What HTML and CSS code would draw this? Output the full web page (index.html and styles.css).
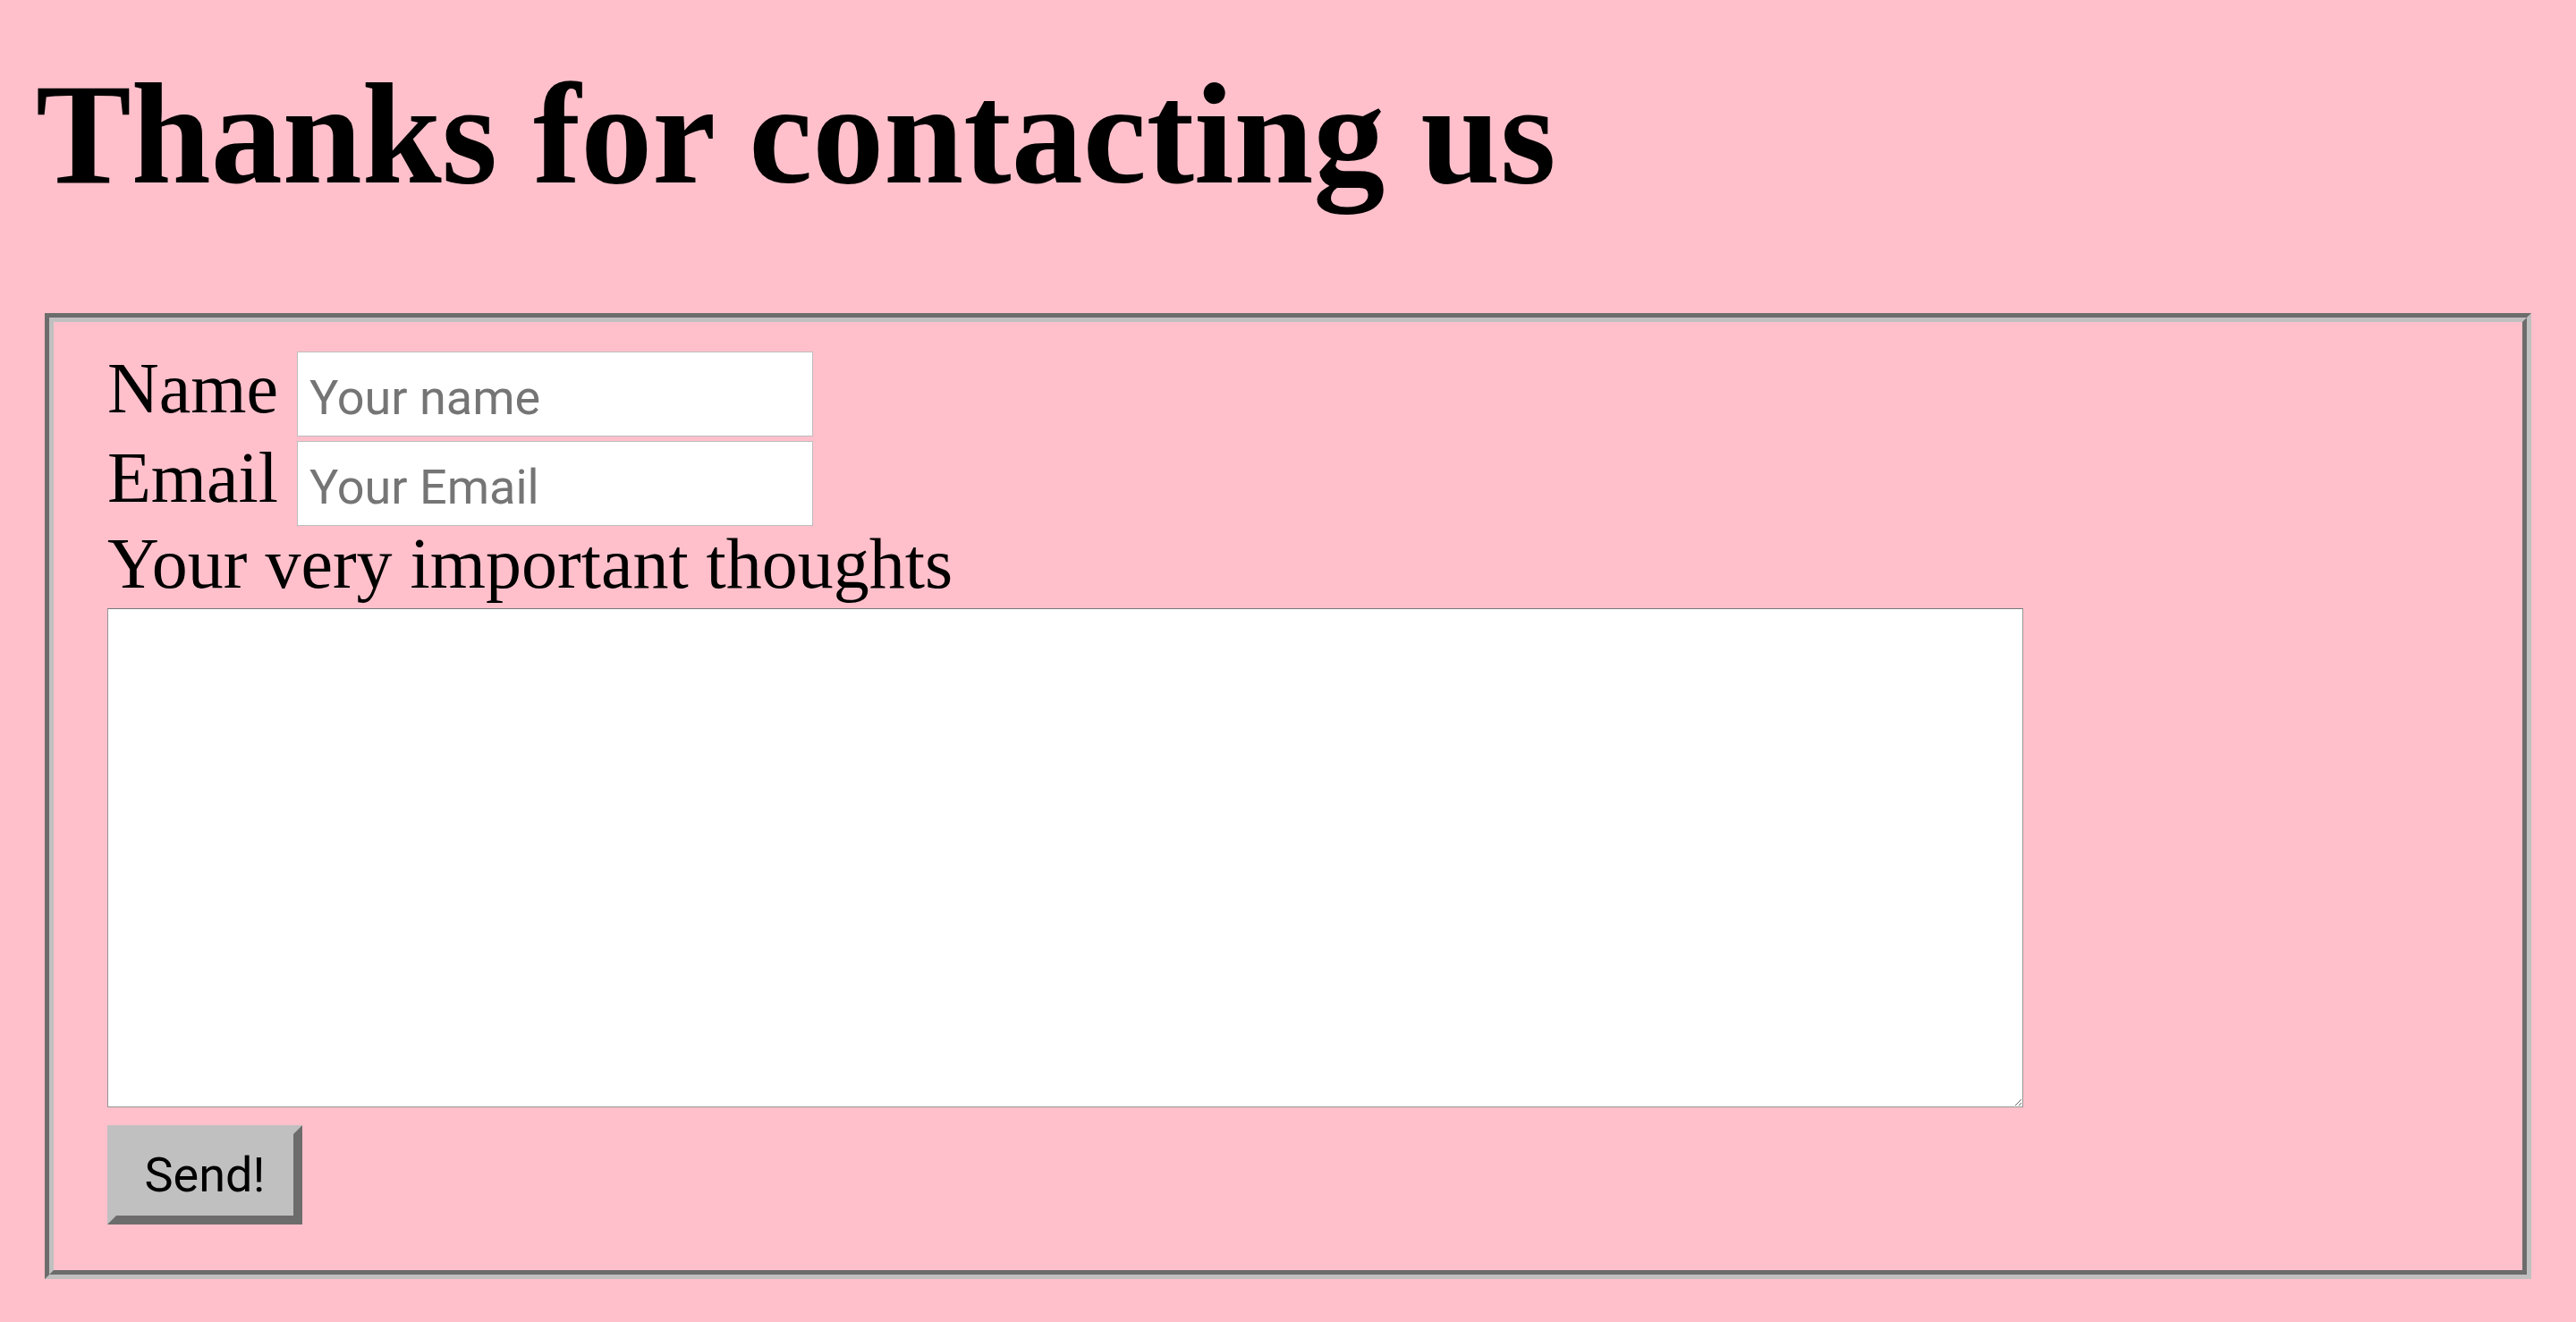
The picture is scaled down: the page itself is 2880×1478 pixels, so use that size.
FILE: index.html
```html
<!DOCTYPE html>
<html lang="en">
<head>
<meta charset="utf-8">
<title>Thanks for contacting us</title>
<link rel="stylesheet" href="styles.css">
</head>
<body>
<h1 class="title">Thanks for contacting us</h1>
<form class="contact-form">
  <fieldset class="contact-fieldset">
    <div class="field-row">
      <label class="field-label" for="name">Name</label>
      <input class="text-input" id="name" type="text" placeholder="Your name">
    </div>
    <div class="field-row">
      <label class="field-label" for="email">Email</label>
      <input class="text-input" id="email" type="email" placeholder="Your Email">
    </div>
    <label class="thoughts-label" for="thoughts">Your very important thoughts</label>
    <textarea class="thoughts" id="thoughts"></textarea>
    <button class="send-button" type="button">Send!</button>
  </fieldset>
</form>
</body>
</html>
```
FILE: styles.css
```css
html {
  background: #ffc0cb;
}

body {
  margin: 0 40px;
  font-family: "Liberation Serif", "Times New Roman", serif;
  font-size: 80px;
  color: #000;
}

.title {
  font-size: 160px;
  font-weight: bold;
  line-height: 184px;
  margin: 58px 0 108px;
}

.contact-form {
  margin: 0;
}

.contact-fieldset {
  margin: 0 10px;
  padding: 28px 60px 51px;
  border: 10px groove #c0c0c0;
  display: flex;
  flex-direction: column;
  align-items: flex-start;
}

.field-row {
  display: flex;
  align-items: flex-start;
  gap: 21px;
  height: 100px;
}

.field-label {
  line-height: 92px;
}

.text-input {
  box-sizing: border-box;
  width: 577px;
  height: 95px;
  margin: 5px 0 0;
  padding: 8px 13px 0;
  border: 1px solid #bdbdbd;
  border-radius: 0;
  background: #fff;
  font-family: Roboto, "Liberation Sans", Arial, sans-serif;
  font-size: 54px;
  color: #000;
  outline: none;
}

.text-input::placeholder {
  color: #757575;
  opacity: 1;
}

.thoughts-label {
  display: block;
  line-height: 84px;
}

.thoughts {
  box-sizing: border-box;
  display: block;
  width: 2142px;
  height: 558px;
  margin: 8px 0 0;
  padding: 0;
  border: 1px solid #969696;
  border-top-color: #787878;
  background: #fff;
  font-family: "Liberation Mono", monospace;
  font-size: 54px;
}

.send-button {
  box-sizing: border-box;
  width: 218px;
  height: 111px;
  margin: 20px 0 0;
  padding: 0;
  border-style: solid;
  border-width: 10px;
  border-color: #c0c0c0 #6c6c6c #6c6c6c #c0c0c0;
  background: #c0c0c0;
  font-family: Roboto, "Liberation Sans", Arial, sans-serif;
  font-size: 54px;
  color: #000;
  cursor: pointer;
}
```
